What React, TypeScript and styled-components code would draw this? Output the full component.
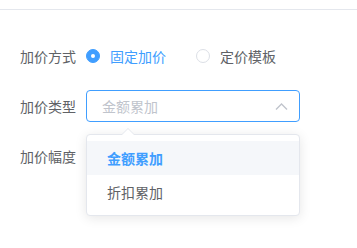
import styled, { createGlobalStyle } from 'styled-components'

const GlobalStyle = createGlobalStyle`
  html, body {
    margin: 0;
    background: #ffffff;
    font-family: "Noto Sans CJK SC", "Noto Sans", sans-serif;
    font-size: 14px;
  }
`

const Page = styled.div`
  min-height: 248px;
  background: #ffffff;
`

const TopBar = styled.div`
  height: 9px;
  border-bottom: 1px solid #e4e7ed;
`

const Form = styled.div`
  padding: 30px 0 0 20px;
  display: flex;
  flex-direction: column;
  row-gap: 18px;
`

const FormItem = styled.div`
  display: flex;
  align-items: center;
  height: 32px;
`

const Label = styled.span`
  width: 66px;
  color: #606266;
  font-size: 14px;
  line-height: 32px;
  flex: 0 0 auto;
`

const RadioGroup = styled.div`
  display: flex;
  align-items: center;
  column-gap: 30px;
`

const Radio = styled.label<{ checked?: boolean }>`
  display: flex;
  align-items: center;
  column-gap: 10px;
  font-size: 14px;
  color: ${(p) => (p.checked ? '#409eff' : '#606266')};
  cursor: pointer;
`

const RadioInner = styled.span<{ checked?: boolean }>`
  box-sizing: border-box;
  width: 14px;
  height: 14px;
  border-radius: 50%;
  border: 1px solid ${(p) => (p.checked ? '#409eff' : '#dcdfe6')};
  background: ${(p) => (p.checked ? '#409eff' : '#ffffff')};
  display: flex;
  align-items: center;
  justify-content: center;
  &::after {
    content: '';
    width: 4px;
    height: 4px;
    border-radius: 50%;
    background: #ffffff;
    display: ${(p) => (p.checked ? 'block' : 'none')};
  }
`

const SelectWrap = styled.div`
  position: relative;
  width: 214px;
`

const SelectBox = styled.div`
  box-sizing: border-box;
  height: 32px;
  border: 1px solid #409eff;
  border-radius: 4px;
  padding: 0 11px 0 15px;
  display: flex;
  align-items: center;
  justify-content: space-between;
`

const Placeholder = styled.span`
  color: #c0c4cc;
  font-size: 14px;
`

const Dropdown = styled.div`
  position: absolute;
  top: 44px;
  left: 0;
  z-index: 10;
  box-sizing: border-box;
  width: 214px;
  padding: 6px 0;
  background: #ffffff;
  border: 1px solid #e4e7ed;
  border-radius: 4px;
  box-shadow: 0 2px 12px 0 rgba(0, 0, 0, 0.1);

  &::before,
  &::after {
    content: '';
    position: absolute;
    left: 35px;
    border: 6px solid transparent;
    border-top-width: 0;
  }
  &::before {
    top: -7px;
    border-bottom-color: #e4e7ed;
  }
  &::after {
    top: -6px;
    border-bottom-color: #ffffff;
  }
`

const Option = styled.div<{ selected?: boolean }>`
  height: 34px;
  line-height: 34px;
  padding: 0 20px;
  font-size: 14px;
  color: ${(p) => (p.selected ? '#409eff' : '#606266')};
  font-weight: ${(p) => (p.selected ? 700 : 400)};
  background: ${(p) => (p.selected ? '#f5f7fa' : '#ffffff')};
`

const Chevron = () => (
  <svg width="13" height="13" viewBox="0 0 13 13" fill="none">
    <path d="M1 9.5 L6.5 4 L12 9.5" stroke="#c0c4cc" strokeWidth="1.4" />
  </svg>
)

export default function App() {
  return (
    <Page>
      <GlobalStyle />
      <TopBar />
      <Form>
        <FormItem>
          <Label>加价方式</Label>
          <RadioGroup>
            <Radio checked>
              <RadioInner checked />
              固定加价
            </Radio>
            <Radio>
              <RadioInner />
              定价模板
            </Radio>
          </RadioGroup>
        </FormItem>
        <FormItem>
          <Label>加价类型</Label>
          <SelectWrap>
            <SelectBox>
              <Placeholder>金额累加</Placeholder>
              <Chevron />
            </SelectBox>
            <Dropdown>
              <Option selected>金额累加</Option>
              <Option>折扣累加</Option>
            </Dropdown>
          </SelectWrap>
        </FormItem>
        <FormItem>
          <Label>加价幅度</Label>
        </FormItem>
      </Form>
    </Page>
  )
}
